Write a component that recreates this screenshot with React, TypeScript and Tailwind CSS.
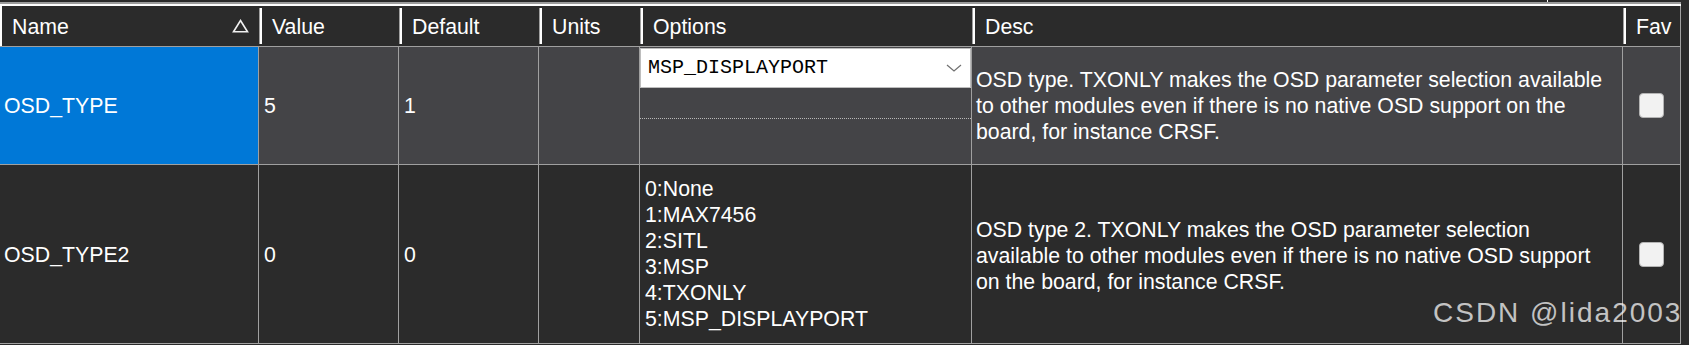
type Row = {
  name: string;
  value: string;
  def: string;
  desc: string[];
  selected?: boolean;
};

const rows: Row[] = [
  {
    name: "OSD_TYPE",
    value: "5",
    def: "1",
    selected: true,
    desc: [
      "OSD type. TXONLY makes the OSD parameter selection available",
      "to other modules even if there is no native OSD support on the",
      "board, for instance CRSF.",
    ],
  },
  {
    name: "OSD_TYPE2",
    value: "0",
    def: "0",
    desc: [
      "OSD type 2. TXONLY makes the OSD parameter selection",
      "available to other modules even if there is no native OSD support",
      "on the board, for instance CRSF.",
    ],
  },
];

const options = ["0:None", "1:MAX7456", "2:SITL", "3:MSP", "4:TXONLY", "5:MSP_DISPLAYPORT"];

function HeaderCell({ label, width }: { label: string; width: string }) {
  return (
    <div className={`${width} flex items-center h-full`}>
      <div className="w-[3px] h-[36px] border-l border-[#a0a0a0] bg-white" />
      <span className="ml-[10px] pt-[2px]">{label}</span>
    </div>
  );
}

function Checkbox() {
  return <div className="w-[25px] h-[25px] rounded-[4px] bg-[#f2f2f2] border border-[#b4b4b4]" />;
}

function Dropdown() {
  return (
    <div className="mt-[1px] h-[40px] bg-white border border-[#bdbdbd] flex items-center justify-between pl-[7px] pr-[8px]">
      <span className="font-['Liberation_Mono',monospace] text-[20px] text-black leading-none">
        MSP_DISPLAYPORT
      </span>
      <svg width="16" height="8" viewBox="0 0 16 8">
        <polyline points="1,1 8,7 15,1" fill="none" stroke="#707070" strokeWidth="1.2" />
      </svg>
    </div>
  );
}

export default function App() {
  return (
    <div className="relative w-[1689px] h-[345px] overflow-hidden bg-[#2b2b2b] text-white font-['Liberation_Sans',Arial,sans-serif] text-[21.3px] leading-[25px]">
      <div className="w-[1681px]">
        {/* top frame lines */}
        <div className="h-[2px] flex">
          <div className="w-[1547px] bg-[#2b2b2b]" />
          <div className="w-[1px] bg-white" />
        </div>
        <div className="h-[2px] bg-[#9d9d9d]" />
        <div className="h-[2px] bg-white" />

        {/* header */}
        <div className="h-[41px] flex border-b border-[#a0a0a0]">
          <div className="w-[259px] h-full border-l-2 border-white flex items-center justify-between pl-[10px] pr-[10px]">
            <span className="pt-[2px]">Name</span>
            <svg width="17" height="14" viewBox="0 0 17 14">
              <polygon points="8.5,1.5 15.5,12.8 1.5,12.8" fill="none" stroke="#f0f0f0" strokeWidth="1.6" />
            </svg>
          </div>
          <HeaderCell label="Value" width="w-[140px]" />
          <HeaderCell label="Default" width="w-[140px]" />
          <HeaderCell label="Units" width="w-[101px]" />
          <HeaderCell label="Options" width="w-[332px]" />
          <HeaderCell label="Desc" width="w-[651px]" />
          <div className="w-[58px] h-full flex items-center border-r border-[#a0a0a0]">
            <div className="w-[3px] h-[36px] border-l border-[#a0a0a0] bg-white" />
            <span className="ml-[10px] pt-[2px]">Fav</span>
          </div>
        </div>

        {/* rows */}
        {rows.map((r, i) => (
          <div
            key={r.name}
            className={`flex border-b border-[#a0a0a0] ${i === 0 ? "h-[118px] bg-[#444447]" : "h-[179px] bg-[#2b2b2b]"}`}
          >
            <div
              className={`w-[259px] border-r border-[#a0a0a0] flex items-center pl-[4px] pt-[2px] ${r.selected ? "bg-[#0078d7]" : ""}`}
            >
              {r.name}
            </div>
            <div className="w-[140px] border-r border-[#a0a0a0] flex items-center pl-[5px] pt-[2px]">{r.value}</div>
            <div className="w-[140px] border-r border-[#a0a0a0] flex items-center pl-[5px] pt-[2px]">{r.def}</div>
            <div className="w-[101px] border-r border-[#a0a0a0]" />
            <div className="w-[332px] border-r border-[#a0a0a0] flex flex-col">
              {i === 0 ? (
                <>
                  <Dropdown />
                  <div className="h-[31px] border-b border-dotted border-[#b8b8b8]" />
                </>
              ) : (
                <div className="h-full flex flex-col justify-center pl-[5px] leading-[26px]">
                  {options.map((o) => (
                    <div key={o} className="whitespace-nowrap">
                      {o}
                    </div>
                  ))}
                </div>
              )}
            </div>
            <div
              className={`w-[651px] border-r border-[#a0a0a0] flex flex-col justify-center pl-[4px] leading-[26px] ${i === 1 ? "pt-[3px]" : "pt-[1px]"}`}
            >
              {r.desc.map((line) => (
                <div key={line} className="whitespace-nowrap">
                  {line}
                </div>
              ))}
            </div>
            <div className="w-[58px] border-r border-[#a0a0a0] flex items-center justify-center">
              <Checkbox />
            </div>
          </div>
        ))}
      </div>

      {/* watermark */}
      <div className="absolute left-[1433px] top-[299px] text-[28px] leading-none tracking-[2px] text-[rgba(255,255,255,0.72)] whitespace-nowrap">
        CSDN @lida2003
      </div>
    </div>
  );
}
